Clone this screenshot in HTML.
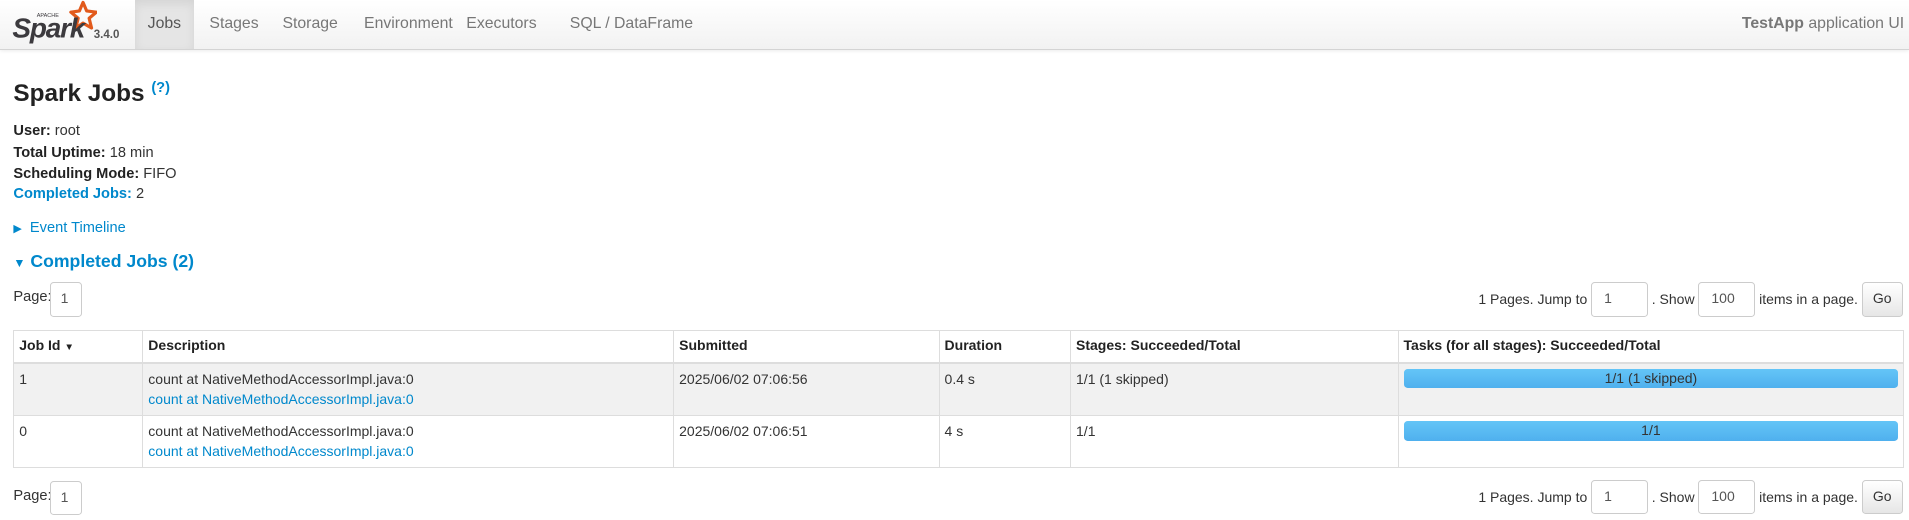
<!DOCTYPE html>
<html><head><meta charset="utf-8"><style>
*{box-sizing:border-box}
html,body{margin:0;width:1909px;height:520px;overflow:hidden;background:#fff}
#w{zoom:1.2175;width:1568px;height:427px;position:relative;font-family:"Liberation Sans",sans-serif;font-size:12px;color:#333}
.nav{position:absolute;left:0;top:0;width:1568px;height:41px;background:linear-gradient(#fff,#f2f2f2);border-bottom:1px solid #d4d4d4;box-shadow:0 1px 3px rgba(0,0,0,.08)}
.tab{position:absolute;top:0;height:40px;line-height:40px;font-size:13px;color:#777}
.jobs{background:#e5e5e5;color:#555;box-shadow:inset 0 3px 8px rgba(0,0,0,.08)}
.a{position:absolute;white-space:nowrap}
b{color:#222}
.blue{color:#0088cc}
table{position:absolute;left:11px;top:271px;width:1553px;border-collapse:collapse;font-size:11.5px}
td,th{border:1px solid #ddd;text-align:left;vertical-align:top;padding:5px 4px;line-height:16px}
th{height:25px;padding:4px 4px;color:#222;border-bottom:2px solid #ddd}
tr.g td{background:#f1f1f1}
.bar{height:16px;margin:0;border-radius:3px;background:linear-gradient(#64c5f7,#4fb0ee);text-align:center;line-height:16px;color:#333}
.inp{height:28px;border:1px solid #ccc;border-radius:3px;background:#fff;line-height:26px;padding-left:10px;color:#555;font-size:11.5px}
.btn{height:28px;width:34px;border:1px solid #ccc;border-radius:3px;background:linear-gradient(#fff,#e6e6e6);line-height:26px;text-align:center;color:#333}
.pg{position:absolute;right:5px;display:flex;align-items:center;gap:3px;font-size:11.5px}
</style></head><body><div id="w">
<div class="nav">
 <svg class="a" style="left:8px;top:0px" width="72" height="40" viewBox="0 0 72 40">
  <path d="M60 2 l3 7 8 1 -6 5 2 8 -7-4 -6 4 2-8 -6-5 7-1z" fill="none" stroke="#e25a1c" stroke-width="2.6" stroke-linejoin="round"/>
  <text x="2" y="31" font-family="Liberation Sans" font-style="italic" font-weight="bold" font-size="23" fill="#3c3a3e" letter-spacing="-1">Spark</text>
  <text x="22" y="14" font-family="Liberation Sans" font-size="4.5" fill="#3c3a3e">APACHE</text>
 </svg>
 <span class="a" style="left:77px;top:24px;font-size:9.5px;color:#555;font-weight:bold">3.4.0</span>
 <div class="tab jobs" style="left:111px;width:48px;text-align:center">Jobs</div>
 <div class="tab" style="left:172px">Stages</div>
 <div class="tab" style="left:232px">Storage</div>
 <div class="tab" style="left:299px">Environment</div>
 <div class="tab" style="left:383px">Executors</div>
 <div class="tab" style="left:468px">SQL / DataFrame</div>
 <div class="tab" style="right:4px;color:#777"><b style="color:#777">TestApp</b> application UI</div>
</div>
<div class="a" style="left:11px;top:66px;font-size:20px;font-weight:bold;color:#222">Spark Jobs <sup class="blue" style="font-size:12px">(?)</sup></div>
<div class="a" style="left:11px;top:101px"><b>User:</b> root</div>
<div class="a" style="left:11px;top:119px"><b>Total Uptime:</b> 18 min</div>
<div class="a" style="left:11px;top:136px"><b>Scheduling Mode:</b> FIFO</div>
<div class="a" style="left:11px;top:153px"><b class="blue">Completed Jobs:</b> 2</div>
<div class="a blue" style="left:11px;top:181px"><span style="font-size:9px">&#9654;</span>&nbsp; Event Timeline</div>
<div class="a blue" style="left:11px;top:206px;font-size:14.5px;font-weight:bold"><span style="font-size:10px">&#9660;</span> Completed Jobs (2)</div>
<div class="a" style="left:11px;top:237px">Page:</div>
<div class="a inp" style="left:41px;top:232px;width:26px;padding-left:8px">1</div>
<div class="pg" style="top:232px"><span>1 Pages. Jump to</span><div class="inp" style="width:47px">1</div><span>. Show</span><div class="inp" style="width:47px">100</div><span>items in a page.</span><div class="btn">Go</div></div>
<table>
<tr><th style="width:106px">Job Id <span style="font-size:8px">&#9660;</span></th><th style="width:436px">Description</th><th style="width:218px">Submitted</th><th style="width:108px">Duration</th><th style="width:269px">Stages: Succeeded/Total</th><th>Tasks (for all stages): Succeeded/Total</th></tr>
<tr class="g" style="height:43px"><td>1</td><td>count at NativeMethodAccessorImpl.java:0<br><span class="blue">count at NativeMethodAccessorImpl.java:0</span></td><td>2025/06/02 07:06:56</td><td>0.4 s</td><td>1/1 (1 skipped)</td><td style="padding-top:4px"><div class="bar">1/1 (1 skipped)</div></td></tr>
<tr style="height:42px"><td>0</td><td>count at NativeMethodAccessorImpl.java:0<br><span class="blue">count at NativeMethodAccessorImpl.java:0</span></td><td>2025/06/02 07:06:51</td><td>4 s</td><td>1/1</td><td style="padding-top:4px"><div class="bar">1/1</div></td></tr>
</table>
<div class="a" style="left:11px;top:401px">Page:</div>
<div class="a inp" style="left:41px;top:395px;width:26px;padding-left:8px">1</div>
<div class="pg" style="top:394px"><span>1 Pages. Jump to</span><div class="inp" style="width:47px">1</div><span>. Show</span><div class="inp" style="width:47px">100</div><span>items in a page.</span><div class="btn">Go</div></div>
</div></body></html>
